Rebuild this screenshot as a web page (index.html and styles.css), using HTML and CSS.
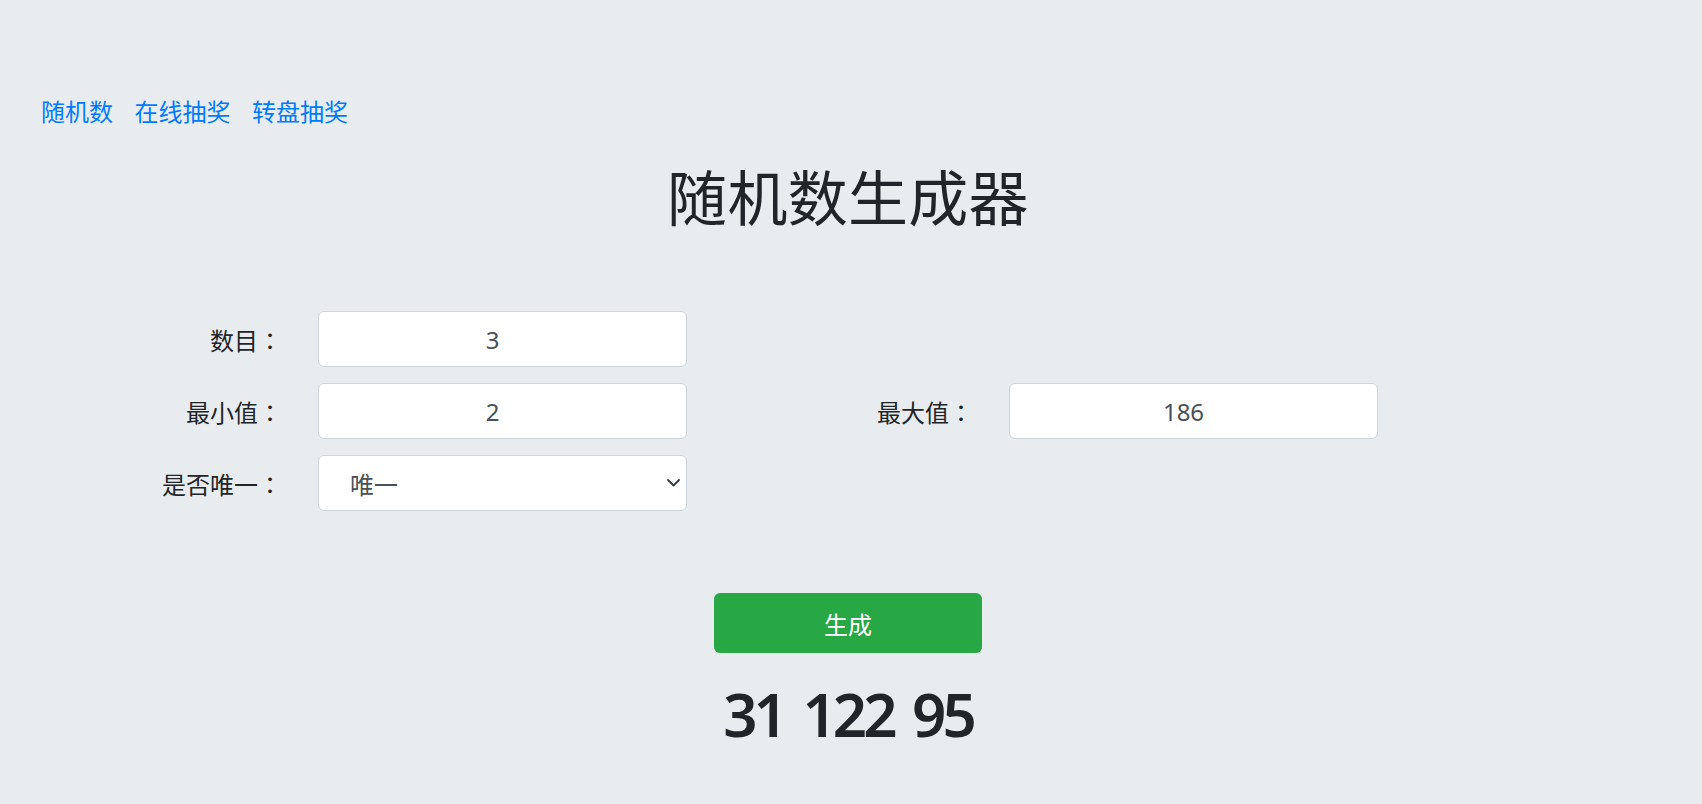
FILE: index.html
```html
<!DOCTYPE html>
<html lang="zh-CN">
<head>
<meta charset="utf-8">
<title>随机数生成器</title>
<link rel="stylesheet" href="styles.css">
</head>
<body>
<nav class="nav">
  <a class="nav-link" href="#">随机数</a>
  <a class="nav-link" href="#">在线抽奖</a>
  <a class="nav-link" href="#">转盘抽奖</a>
</nav>
<main class="main">
  <h1 class="title">随机数生成器</h1>
  <form class="form">
    <label class="label">数目<span class="colon">：</span></label>
    <input class="field num" type="text" value="3">
    <div class="spacer"></div>
    <div class="spacer"></div>

    <label class="label">最小值<span class="colon">：</span></label>
    <input class="field num" type="text" value="2">
    <label class="label">最大值<span class="colon">：</span></label>
    <input class="field num" type="text" value="186">

    <label class="label">是否唯一<span class="colon">：</span></label>
    <div class="select-wrap">
      <select class="field select">
        <option>唯一</option>
        <option>不唯一</option>
      </select>
      <svg class="chevron" width="13" height="8" viewBox="0 0 13 8"><polyline points="1,1 6.5,6.5 12,1" fill="none" stroke="#343a40" stroke-width="1.8" stroke-linecap="round" stroke-linejoin="round"/></svg>
    </div>
  </form>
  <button class="btn" type="button">生成</button>
  <div class="result">31 122 95</div>
</main>
</body>
</html>
```

FILE: styles.css
```css
html, body {
  margin: 0;
  padding: 0;
}
body {
  background: #e9ecef;
  color: #212529;
  font-family: "Noto Sans", "Noto Sans CJK SC", sans-serif;
  font-size: 24px;
  padding-top: 93px;
  height: 804px;
  box-sizing: border-box;
  overflow: hidden;
}
.nav {
  display: flex;
  gap: 21.5px;
  padding-left: 41px;
  height: 36px;
  line-height: 36px;
}
.nav-link {
  color: #007bff;
  text-decoration: none;
  font-family: "Noto Sans CJK SC", sans-serif;
}
.main {
  display: flex;
  flex-direction: column;
  align-items: center;
  width: 1696px;
}
.title {
  margin: 30px 0 0;
  font-family: "Noto Sans CJK SC", sans-serif;
  font-weight: 400;
  font-size: 60px;
  line-height: 72px;
  letter-spacing: 0.3px;
}
.form {
  align-self: flex-start;
  margin-top: 80px;
  display: grid;
  grid-template-columns: 282px 369px 250px 369px;
  grid-auto-rows: 56px;
  column-gap: 36px;
  row-gap: 16px;
}
.label {
  display: flex;
  align-items: center;
  justify-content: flex-end;
  font-family: "Noto Sans CJK SC", sans-serif;
  font-size: 24px;
  color: #212529;
}
.colon {
  font-family: "Noto Sans CJK TC", sans-serif;
}
.field {
  box-sizing: border-box;
  width: 369px;
  height: 56px;
  margin: 0;
  border: 1px solid #ced4da;
  border-radius: 6px;
  background: #fff;
  color: #495057;
  font-family: "Noto Sans", "Noto Sans CJK SC", sans-serif;
  font-size: 24px;
  outline: none;
}
.num {
  text-align: center;
  padding: 0 30px 0 10px;
}
.select-wrap {
  position: relative;
  width: 369px;
  height: 56px;
}
.select {
  appearance: none;
  -webkit-appearance: none;
  padding: 0 40px 0 31px;
  font-family: "Noto Sans CJK SC", sans-serif;
}
.chevron {
  position: absolute;
  right: 7px;
  top: 24px;
  pointer-events: none;
}
.btn {
  margin-top: 82px;
  width: 268px;
  height: 60px;
  border: none;
  border-radius: 6px;
  background: #28a745;
  color: #fff;
  font-family: "Noto Sans CJK SC", sans-serif;
  font-size: 24px;
  padding: 0;
}
.result {
  margin-top: 24px;
  font-family: "Noto Sans", sans-serif;
  font-weight: 600;
  font-size: 60px;
  line-height: 74px;
  letter-spacing: -4px;
  word-spacing: 7px;
}
```
